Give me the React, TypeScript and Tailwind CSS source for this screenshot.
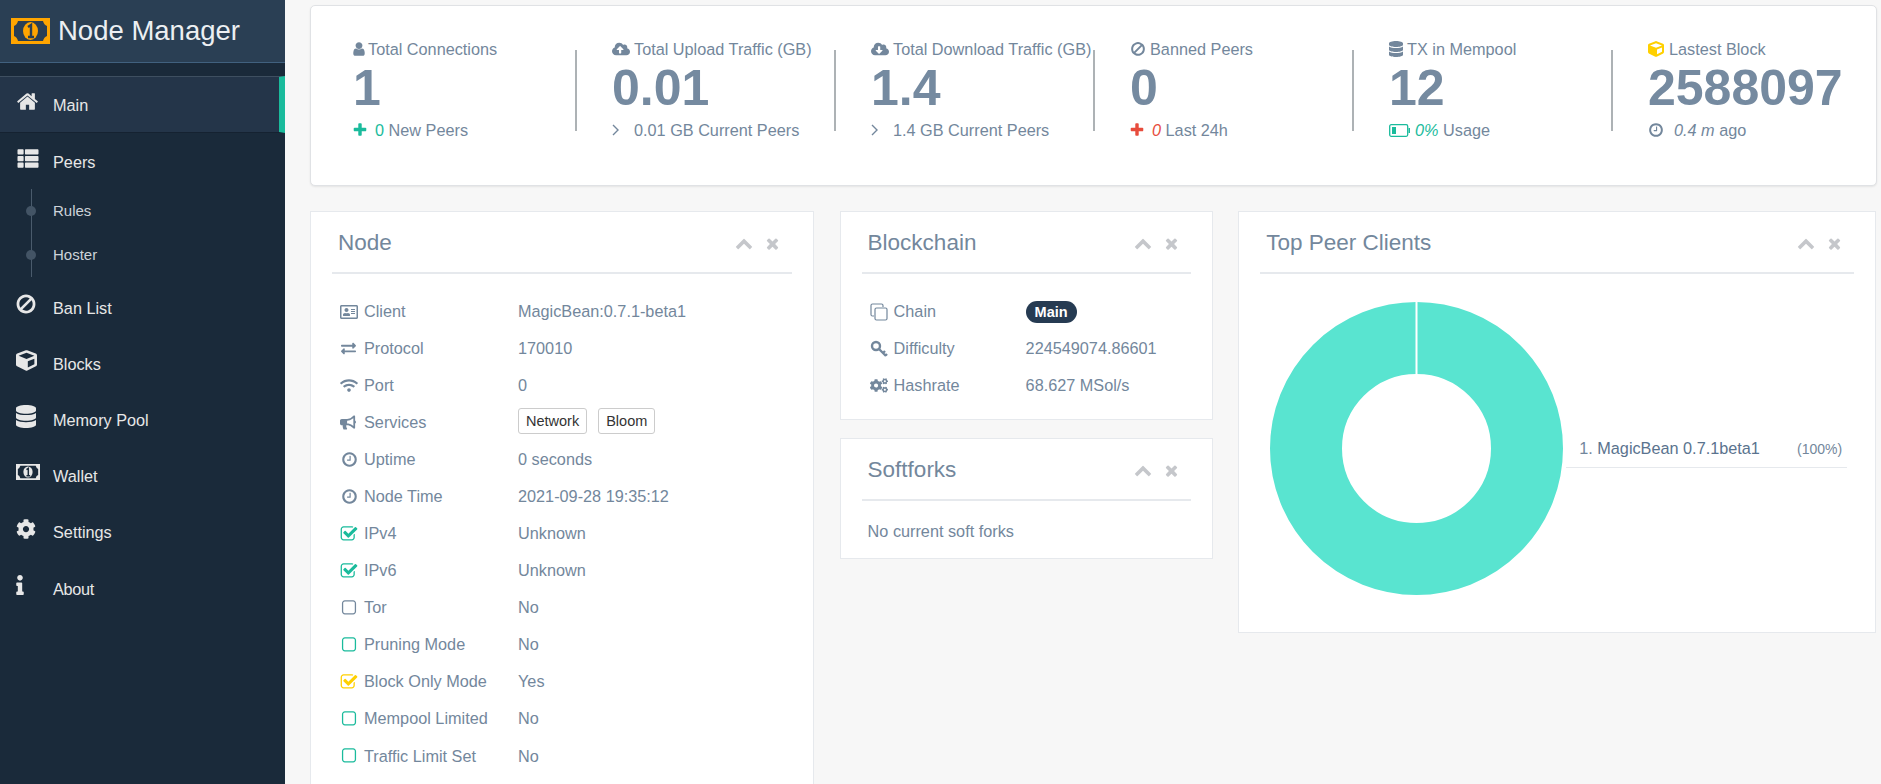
import type { ReactNode } from 'react';
import {
  FaThList, FaCube, FaDatabase, FaCog, FaInfo, FaCloudUploadAlt, FaCloudDownloadAlt,
  FaRegAddressCard, FaExchangeAlt, FaWifi, FaBullhorn, FaCogs,
} from 'react-icons/fa';

const HOME = 'M1472 992v480q0 26-19 45t-45 19h-384v-384h-256v384h-384q-26 0-45-19t-19-45v-480q0-1 .5-3t.5-3l575-474 575 474q1 2 1 6zm223-69l-62 74q-8 9-21 11h-3q-13 0-21-7l-692-577-692 577q-12 8-24 7-13-2-21-11l-62-74q-8-10-7-23.5t11-21.5l719-599q32-26 76-26t76 26l244 204v-195q0-14 9-23t23-9h192q14 0 23 9t9 23v408l219 182q10 8 11 21.5t-7 23.5z';
const CLOCK = 'M1024 544v448q0 14-9 23t-23 9h-320q-14 0-23-9t-9-23v-64q0-14 9-23t23-9h224v-352q0-14 9-23t23-9h64q14 0 23 9t9 23zm416 352q0-148-73-273t-198-198-273-73-273 73-198 198-73 273 73 273 198 198 273 73 273-73 198-198 73-273zm224 0q0 209-103 385.5t-279.5 279.5-385.5 103-385.5-103-279.5-279.5-103-385.5 103-385.5 279.5-279.5 385.5-103 385.5 103 279.5 279.5 103 385.5z';
const CHECK = 'M1472 930v318q0 119-84.5 203.5t-203.5 84.5h-832q-119 0-203.5-84.5t-84.5-203.5v-832q0-119 84.5-203.5t203.5-84.5h832q63 0 117 25 15 7 18 23 3 17-9 29l-49 49q-10 10-23 10-3 0-9-2-23-6-45-6h-832q-66 0-113 47t-47 113v832q0 66 47 113t113 47h832q66 0 113-47t47-113v-254q0-13 9-22l64-64q10-10 23-10 6 0 12 3 20 8 20 29zm231-489l-814 814q-24 24-57 24t-57-24l-430-430q-24-24-24-57t24-57l110-110q24-24 57-24t57 24l263 263 647-647q24-24 57-24t57 24l110 110q24 24 24 57t-24 57z';
const SQUARE = 'M1312 256h-832q-66 0-113 47t-47 113v832q0 66 47 113t113 47h832q66 0 113-47t47-113v-832q0-66-47-113t-113-47zm288 160v832q0 119-84.5 203.5t-203.5 84.5h-832q-119 0-203.5-84.5t-84.5-203.5v-832q0-119 84.5-203.5t203.5-84.5h832q119 0 203.5 84.5t84.5 203.5z';
const CHEVRON = 'M1683 1331l-166 165q-19 19-45 19t-45-19l-531-531-531 531q-19 19-45 19t-45-19l-166-165q-19-19-19-45.5t19-45.5l742-741q19-19 45-19t45 19l742 741q19 19 19 45.5t-19 45.5z';
const TIMES = 'M1490 1322q0 40-28 68l-136 136q-28 28-68 28t-68-28l-294-294-294 294q-28 28-68 28t-68-28l-136-136q-28-28-28-68t28-68l294-294-294-294q-28-28-28-68t28-68l136-136q28-28 68-28t68 28l294 294 294-294q28-28 68-28t68 28l136 136q28 28 28 68t-28 68l-294 294 294 294q28 28 28 68z';
const PLUS = 'M1600 736v192q0 40-28 68t-68 28h-416v416q0 40-28 68t-68 28h-192q-40 0-68-28t-28-68v-416h-416q-40 0-68-28t-28-68v-192q0-40 28-68t68-28h416v-416q0-40 28-68t68-28h192q40 0 68 28t28 68v416h416q40 0 68 28t28 68z';
const BAN = 'M1440 893q0-161-87-295l-754 753q137 89 297 89 111 0 211.5-43.5t173.5-116.5 116-174.5 43-212.5zm-999 299l755-754q-135-91-300-91-148 0-273 73t-198 199-73 274q0 162 89 299zm1223-299q0 157-61 300t-163.5 246-245 164-298.5 61-298.5-61-245-164-163.5-246-61-300 61-299.5 163.5-245.5 245-164 298.5-61 298.5 61 245 164 163.5 245.5 61 299.5z';
const USER = 'M1536 1399q0 109-62.5 187t-150.5 78h-854q-88 0-150.5-78t-62.5-187q0-85 8.5-160.5t31.5-152 58.5-131 94-89 134.5-34.5q131 128 313 128t313-128q76 0 134.5 34.5t94 89 58.5 131 31.5 152 8.5 160.5zm-256-887q0 159-112.5 271.5t-271.5 112.5-271.5-112.5-112.5-271.5 112.5-271.5 271.5-112.5 271.5 112.5 112.5 271.5z';

function Fa4({ d, className }: { d: string; className?: string }) {
  return (
    <svg viewBox="0 0 1792 1792" className={`shrink-0 ${className ?? ''}`} fill="currentColor">
      <path d={d} />
    </svg>
  );
}

function Money({ frame, inner, className }: { frame: string; inner: string; className?: string }) {
  return (
    <svg viewBox="0 0 39 26" className={`shrink-0 ${className ?? ''}`}>
      <rect width="39" height="26" fill={frame} />
      <path d="M7 3h25q1 4 4 5v10q-3 1-4 5H7q-1-4-4-5V8q3-1 4-5z" fill={inner} />
      <ellipse cx="19.5" cy="13" rx="7.5" ry="9" fill={frame} />
      <path d="M17 9l3-2v12M17 19h6" stroke={inner} strokeWidth="2.4" fill="none" />
    </svg>
  );
}

function Battery({ className }: { className?: string }) {
  return (
    <svg viewBox="0 0 21 13" className={`shrink-0 ${className ?? ''}`}>
      <rect x="0.7" y="0.7" width="18" height="11.6" rx="1.5" fill="none" stroke="currentColor" strokeWidth="1.3" />
      <rect x="3" y="3" width="4" height="7" fill="currentColor" />
      <rect x="19.5" y="4" width="1.5" height="5" fill="currentColor" />
    </svg>
  );
}

function Angle() {
  return (
    <svg viewBox="0 0 7 12" className="w-[7px] h-[12px] mr-[15px] shrink-0" fill="none" stroke="currentColor" strokeWidth="1.4">
      <path d="M1 1l5 5-5 5" />
    </svg>
  );
}

function KeyIcon() {
  return (
    <svg viewBox="0 0 18 18" className="w-[18px] h-[18px]" fill="none" stroke="currentColor" strokeWidth="2.4">
      <circle cx="6" cy="6" r="4" />
      <path d="M9 9l7 7M13 13l2-2M15.5 15.5l1.5-1.5" />
    </svg>
  );
}

function CloneIcon() {
  return (
    <svg viewBox="0 0 18 18" className="w-[18px] h-[18px]" fill="none" stroke="currentColor" strokeWidth="1.2">
      <path d="M4 13H2.5Q1 13 1 11.5v-9Q1 1 2.5 1h9Q13 1 13 2.5V4" />
      <rect x="5" y="5" width="12" height="12" rx="1.5" />
    </svg>
  );
}

const navItems = [
  { label: 'Ban List', icon: <Fa4 d={BAN} className="w-[22px] h-[22px] -ml-px" />, row: 'h-14' },
  { label: 'Blocks', icon: <FaCube className="w-[21px] h-[21px]" />, row: 'h-14' },
  { label: 'Memory Pool', icon: <FaDatabase className="w-[20px] h-[23px]" />, row: 'h-14' },
  { label: 'Wallet', icon: <Money frame="#e7e7e7" inner="#1a2a3a" className="w-6 h-4" />, row: 'h-14' },
  { label: 'Settings', icon: <FaCog className="w-[20px] h-[20px]" />, row: 'h-[57px]' },
  { label: 'About', icon: <FaInfo className="w-[20px] h-[20px] -ml-[6px]" />, row: 'h-14 -tracking-[0.02em]' },
];

function Sidebar() {
  return (
    <aside className="w-[285px] shrink-0 h-full bg-[#1a2a3a] text-[#e7e7e7] text-[16.25px]">
      <div className="h-[63px] bg-[#2a3f54] border-b border-[#41617f] flex items-center pl-[11px]">
        <Money frame="#ffa500" inner="#2a3f54" className="w-[39px] h-[26px]" />
        <span className="ml-[8px] -mt-px text-[27.5px] text-[#eceff2]">Node Manager</span>
      </div>

      <div className="mt-[13px] h-[57px] pt-[2px] bg-[#243549] border-t border-[#3e4f60] border-b border-b-[#152231] flex items-center pl-4 border-r-[6px] border-r-[#1abb9c]">
        <span className="w-[37px] shrink-0 -mt-2">
          <Fa4 d={HOME} className="w-[23px] h-[23px]" />
        </span>
        Main
      </div>

      <div className="h-14 pt-[2px] flex items-center pl-4">
        <span className="w-[37px] shrink-0 -mt-2">
          <FaThList className="w-6 h-[21px]" />
        </span>
        Peers
      </div>

      <div className="relative h-[90px] text-[15px] text-[#cdd3d9]">
        <span className="absolute left-[31px] top-0 h-[88px] w-px bg-[#4a5b6c]" />
        {['Rules', 'Hoster'].map((s) => (
          <div key={s} className="relative h-11 flex items-center pl-[53px]">
            <span className="absolute left-[26px] top-[17px] w-[10px] h-[10px] rounded-full bg-[#435465]" />
            {s}
          </div>
        ))}
      </div>

      {navItems.map((n) => (
        <div key={n.label} className={`flex items-center pl-4 pt-[2px] ${n.row}`}>
          <span className="w-[37px] shrink-0 -mt-2">{n.icon}</span>
          {n.label}
        </div>
      ))}
    </aside>
  );
}

const stats: { label: string; icon: ReactNode; value: string; sub: ReactNode }[] = [
  {
    label: 'Total Connections',
    icon: <Fa4 d={USER} className="w-[16px] h-[16px] -ml-[2px] mr-[1px]" />,
    value: '1',
    sub: (
      <>
        <Fa4 d={PLUS} className="w-[16px] h-[16px] -ml-[1px] text-[#1abb9c] mr-[7px]" />
        <span className="text-[#1abb9c]">0</span>&nbsp;New Peers
      </>
    ),
  },
  {
    label: 'Total Upload Traffic (GB)',
    icon: <FaCloudUploadAlt className="w-[18px] h-[16px] mr-[4px] shrink-0" />,
    value: '0.01',
    sub: (
      <>
        <Angle />
        0.01 GB Current Peers
      </>
    ),
  },
  {
    label: 'Total Download Traffic (GB)',
    icon: <FaCloudDownloadAlt className="w-[18px] h-[16px] mr-[4px] shrink-0" />,
    value: '1.4',
    sub: (
      <>
        <Angle />
        1.4 GB Current Peers
      </>
    ),
  },
  {
    label: 'Banned Peers',
    icon: <Fa4 d={BAN} className="w-[16px] h-[16px] mr-[4px]" />,
    value: '0',
    sub: (
      <>
        <Fa4 d={PLUS} className="w-[16px] h-[16px] -ml-[1px] text-[#e74c3c] mr-[7px]" />
        <i className="text-[#e74c3c]">0</i>&nbsp;Last 24h
      </>
    ),
  },
  {
    label: 'TX in Mempool',
    icon: <FaDatabase className="w-[14px] h-[16px] mr-[4px] shrink-0" />,
    value: '12',
    sub: (
      <>
        <Battery className="w-[21px] h-[13px] text-[#1abb9c] mr-[5px]" />
        <i className="text-[#1abb9c]">0%</i>&nbsp;Usage
      </>
    ),
  },
  {
    label: 'Lastest Block',
    icon: <FaCube className="w-[16px] h-[16px] text-[#ffd000] mr-[5px] shrink-0" />,
    value: '2588097',
    sub: (
      <>
        <Fa4 d={CLOCK} className="w-[16px] h-[16px] mr-[10px]" />
        <i>0.4 m</i>&nbsp;ago
      </>
    ),
  },
];

function StatsCard() {
  return (
    <section className="h-[181px] bg-white border border-[#e0e2e5] rounded-[5px] shadow-[0_1px_2px_rgba(0,0,0,0.08)] pt-[32px] pl-[7px] grid grid-cols-[repeat(6,259px)]">
      {stats.map((s, i) => (
        <div key={s.label} className="flex">
          <div className="flex-1 min-w-0 pl-[35px] whitespace-nowrap">
            <div className="h-[22px] flex items-center">
              {s.icon}
              {s.label}
            </div>
            <div className="h-[56px] leading-[56px] text-[50px] font-bold text-[#758aa0]">{s.value}</div>
            <div className="h-[22px] mt-[3px] flex items-center">{s.sub}</div>
          </div>
          {i < 5 && <div className="w-0.5 h-[81px] mt-[12px] bg-[#adb2b5]" />}
        </div>
      ))}
    </section>
  );
}

function Panel({ title, children, className }: { title: string; children: ReactNode; className?: string }) {
  return (
    <section className={`bg-white border border-[#e6e9ed] px-[21px] ${className ?? ''}`}>
      <div className="h-[62px] border-b-2 border-[#e6e9ed] flex items-center pl-[6px] pr-[11px] pt-[2px]">
        <h2 className="text-[22.5px] flex-1">{title}</h2>
        <Fa4 d={CHEVRON} className="w-[18px] h-[18px] text-[#c5c7cb]" />
        <Fa4 d={TIMES} className="w-[17px] h-[17px] ml-[11px] text-[#c5c7cb]" />
      </div>
      {children}
    </section>
  );
}

function Row({ icon, label, labelW, children }: { icon: ReactNode; label: string; labelW: string; children: ReactNode }) {
  return (
    <div className="flex items-center h-[37.03px] pl-2">
      <span className="w-6 shrink-0 flex items-center">{icon}</span>
      <span className={labelW}>{label}</span>
      {children}
    </div>
  );
}

const box = 'w-[18px] h-[18px]';

const nodeRows: { icon: ReactNode; label: string; value: ReactNode }[] = [
  { icon: <FaRegAddressCard className="w-[18px] h-[16px]" />, label: 'Client', value: 'MagicBean:0.7.1-beta1' },
  { icon: <FaExchangeAlt className="w-[17px] h-[15px]" />, label: 'Protocol', value: '170010' },
  { icon: <FaWifi className="w-[18px] h-[15px]" />, label: 'Port', value: '0' },
  {
    icon: <FaBullhorn className="w-[16px] h-[15px]" />,
    label: 'Services',
    value: (
      <div className="flex gap-[11px] -mt-[4px] text-[14.5px] text-[#333]">
        <span className="h-[26px] leading-[24px] px-[7px] border border-[#ccc] rounded-[3px]">Network</span>
        <span className="h-[26px] leading-[24px] px-[7px] border border-[#ccc] rounded-[3px]">Bloom</span>
      </div>
    ),
  },
  { icon: <Fa4 d={CLOCK} className="w-[17px] h-[17px] ml-px" />, label: 'Uptime', value: '0 seconds' },
  { icon: <Fa4 d={CLOCK} className="w-[17px] h-[17px] ml-px" />, label: 'Node Time', value: '2021-09-28 19:35:12' },
  { icon: <Fa4 d={CHECK} className={`${box} text-[#1abb9c]`} />, label: 'IPv4', value: 'Unknown' },
  { icon: <Fa4 d={CHECK} className={`${box} text-[#1abb9c]`} />, label: 'IPv6', value: 'Unknown' },
  { icon: <Fa4 d={SQUARE} className={`${box} text-[#73879c]`} />, label: 'Tor', value: 'No' },
  { icon: <Fa4 d={SQUARE} className={`${box} text-[#1abb9c]`} />, label: 'Pruning Mode', value: 'No' },
  { icon: <Fa4 d={CHECK} className={`${box} text-[#ffd000]`} />, label: 'Block Only Mode', value: 'Yes' },
  { icon: <Fa4 d={SQUARE} className={`${box} text-[#1abb9c]`} />, label: 'Mempool Limited', value: 'No' },
  { icon: <Fa4 d={SQUARE} className={`${box} text-[#1abb9c]`} />, label: 'Traffic Limit Set', value: 'No' },
];

function Donut() {
  return (
    <svg viewBox="0 0 293 293" className="w-[293px] h-[293px] shrink-0">
      <circle cx="146.5" cy="146.5" r="110.5" fill="none" stroke="#59e4d0" strokeWidth="72" />
      <rect x="145.5" y="0" width="2" height="73" fill="#fff" />
    </svg>
  );
}

export default function App() {
  return (
    <div className="flex h-screen overflow-hidden bg-[#f7f7f7] text-[16.25px] text-[#73879c] font-['Liberation_Sans',Arial,sans-serif]">
      <Sidebar />
      <main className="flex-1 min-w-0 pl-[25px] pr-[4px] pt-[5px]">
        <StatsCard />
        <div className="mt-[25px] grid grid-cols-[504px_373px_638px] gap-x-[25.6px] items-start">
          <Panel title="Node">
            <div className="mt-[19px] pb-4">
              {nodeRows.map((r) => (
                <Row key={r.label} icon={r.icon} label={r.label} labelW="w-[154px]">
                  {r.value}
                </Row>
              ))}
            </div>
          </Panel>

          <div className="flex flex-col gap-[18px]">
            <Panel title="Blockchain">
              <div className="mt-[19px] pb-[15px]">
                <Row icon={<CloneIcon />} label="Chain" labelW="w-[132px]">
                  <span className="h-[22px] leading-[22px] px-[9px] rounded-full bg-[#263b52] text-white text-[14.5px] font-bold">Main</span>
                </Row>
                <Row icon={<KeyIcon />} label="Difficulty" labelW="w-[132px]">
                  224549074.86601
                </Row>
                <Row icon={<FaCogs className="w-[18px] h-[15px]" />} label="Hashrate" labelW="w-[132px]">
                  68.627 MSol/s
                </Row>
              </div>
            </Panel>
            <Panel title="Softforks">
              <p className="h-[57px] flex items-center pl-[6px] pt-[4px]">No current soft forks</p>
            </Panel>
          </div>

          <Panel title="Top Peer Clients">
            <div className="mt-7 mb-[37px] ml-[10px] mr-[7px] flex items-center gap-[3px]">
              <Donut />
              <div className="flex-1 h-[38px] pt-[1px] border-b border-[#e6e9ed] flex items-center justify-between pl-[13px] pr-[5px]">
                <span>
                  1. <span className="text-[#5a738e]">MagicBean 0.7.1beta1</span>
                </span>
                <span className="text-sm">(100%)</span>
              </div>
            </div>
          </Panel>
        </div>
      </main>
    </div>
  );
}
